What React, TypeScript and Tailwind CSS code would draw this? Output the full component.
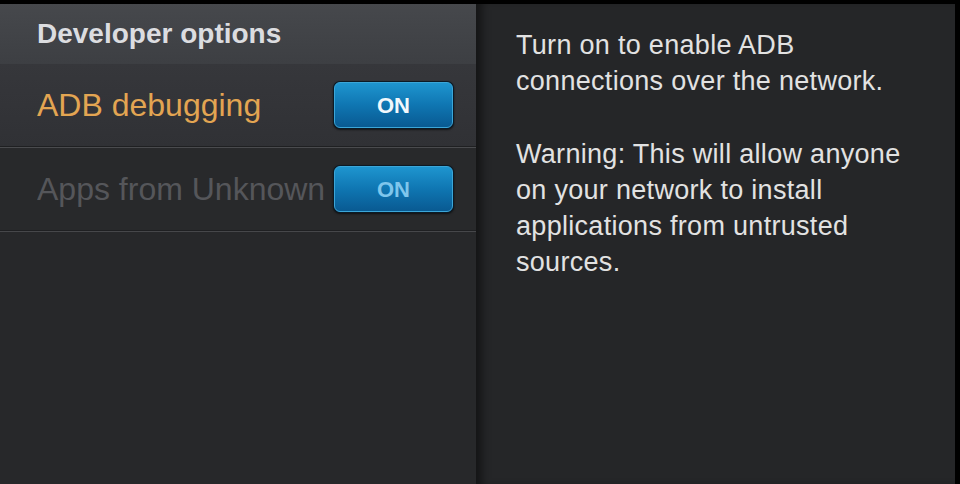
const font = { fontFamily: '"Liberation Sans", Arial, sans-serif' };

function OnButton({ dim }: { dim?: boolean }) {
  return (
    <div className="rounded-[7px] bg-[#0b1a26] p-px shadow-[0_1px_2px_rgba(0,0,0,0.6)]">
      <div
        className={
          "flex h-[46px] w-[119px] items-center justify-center rounded-[6px] border border-[#3ba6d8] bg-gradient-to-b from-[#1e95cf] via-[#0f76b2] to-[#095a92] text-[22px] font-bold " +
          (dim ? "text-[#7fc6ec]" : "text-[#f2f8fc]")
        }
      >
        ON
      </div>
    </div>
  );
}

export default function App() {
  return (
    <div className="h-[484px] w-[960px] overflow-hidden bg-black pt-[4px] pr-[5px]" style={font}>
      <div className="flex h-full">
        <div className="flex w-[476px] flex-col bg-[#27282a]">
          <div className="flex h-[60px] items-center bg-gradient-to-b from-[#46484c] to-[#3d3f43] pl-[37px] pb-[1px]">
            <span className="text-[28px] font-bold text-[#dcdde0]">Developer options</span>
          </div>
          <div className="flex h-[82px] items-center justify-between bg-gradient-to-b from-[#36373b] to-[#303135] pl-[37px] pr-[22px]">
            <span className="text-[32px] text-[#e3a552]">ADB debugging</span>
            <OnButton />
          </div>
          <div className="h-[2px] bg-[#4a4b4e] border-t border-[#1f2022]" />
          <div className="flex h-[82px] items-center bg-[#28292b] pl-[37px] pr-[22px]">
            <span className="w-[291px] overflow-hidden whitespace-nowrap text-[32px] text-[#55565a]">
              Apps from Unknown Sources
            </span>
            <div className="ml-auto">
              <OnButton dim />
            </div>
          </div>
          <div className="h-[2px] bg-[#46474a] border-t border-[#1f2022]" />
          <div className="flex-1 bg-[#27282a]" />
        </div>
        <div className="flex flex-1 bg-[#252628] shadow-[inset_10px_0_8px_-4px_rgba(0,0,0,0.45)]">
          <div className="pl-[40px] pt-[23px] text-[27px] leading-[36px] tracking-[0.3px] text-[#e2e2e2]">
            <p>Turn on to enable ADB</p>
            <p>connections over the network.</p>
            <p className="mt-[37px]">Warning: This will allow anyone</p>
            <p>on your network to install</p>
            <p>applications from untrusted</p>
            <p>sources.</p>
          </div>
        </div>
      </div>
    </div>
  );
}
